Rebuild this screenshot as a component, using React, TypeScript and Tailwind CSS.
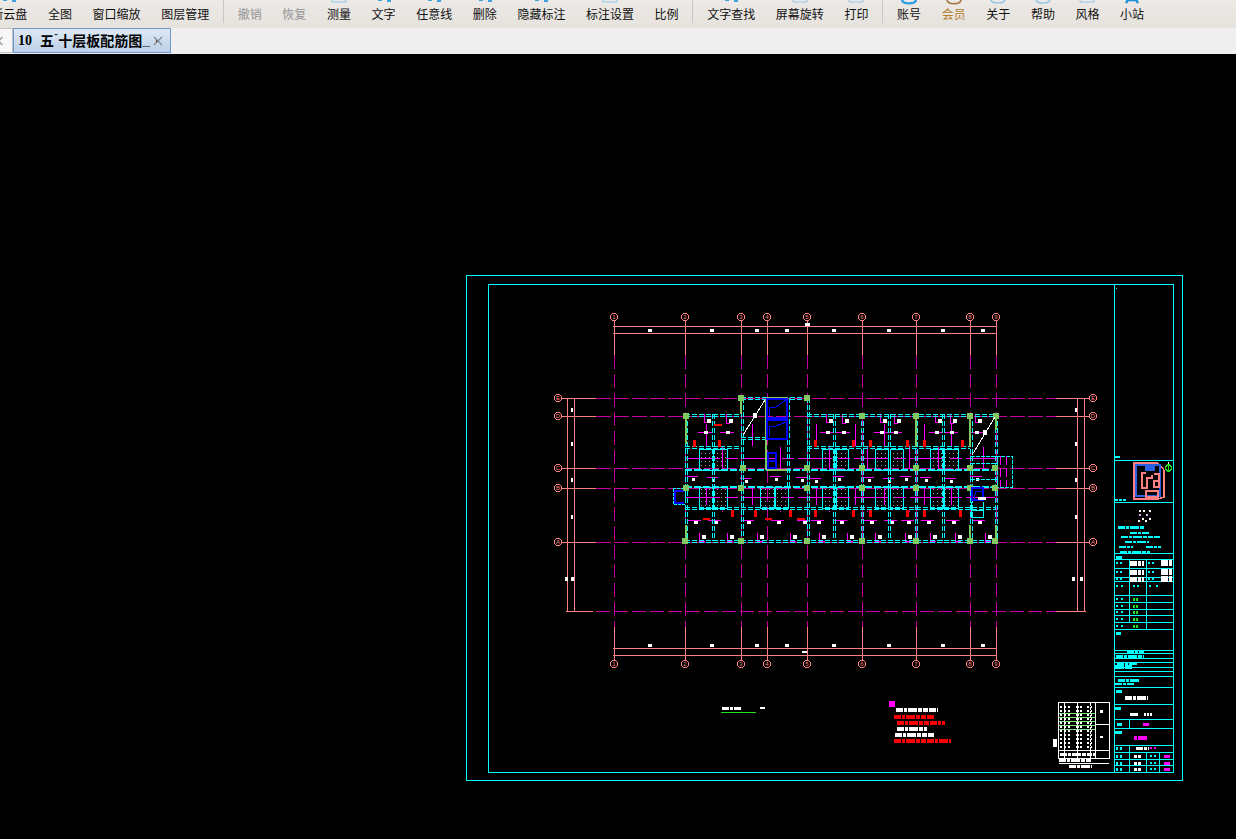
const CY = "#00ffff", SA = "#ff8080", MG = "#ff00ff", DM = "#c800a0", GR = "#80c860", RD = "#ff0000", BL = "#0000ff", WH = "#ffffff";

type Frag = "none" | "box" | "specks" | "arc" | "arcStrong" | "arcBrown" | "legs";
type Item = { t: string; frag?: Frag; c?: string; sep?: boolean };

const items: Item[] = [
  { t: "新云盘", frag: "specks" },
  { t: "全图" },
  { t: "窗口缩放" },
  { t: "图层管理", sep: true },
  { t: "撤销", c: "text-[#949494]" },
  { t: "恢复", c: "text-[#949494]" },
  { t: "测量", frag: "box" },
  { t: "文字", frag: "specks" },
  { t: "任意线", frag: "specks" },
  { t: "删除", frag: "specks" },
  { t: "隐藏标注", frag: "specks" },
  { t: "标注设置", frag: "box" },
  { t: "比例", sep: true },
  { t: "文字查找", frag: "specks" },
  { t: "屏幕旋转", frag: "box" },
  { t: "打印", frag: "box", sep: true },
  { t: "账号", frag: "arcStrong" },
  { t: "会员", frag: "arcBrown", c: "text-[#b5812f]" },
  { t: "关于", frag: "arc" },
  { t: "帮助", frag: "arc" },
  { t: "风格", frag: "box" },
  { t: "小站", frag: "legs" },
];

function Fragment({ f }: { f: Frag }) {
  if (f === "none") return null;
  return (
    <svg width="24" height="6" viewBox="0 0 24 6" className="absolute top-0 left-1/2 -translate-x-1/2">
      {f === "box" && <path d="M5 0V2H19V0" fill="none" stroke="#8cc8ec" strokeWidth="1" />}
      {f === "specks" && <path d="M6 0H10V1H6ZM15 0H19V2H15Z" fill="#3ba3e0" />}
      {f === "arc" && <path d="M5 0C6 4 18 4 19 0" fill="none" stroke="#7cc0e8" strokeWidth="1.2" />}
      {f === "arcStrong" && <path d="M5 0C6 4.5 18 4.5 19 0" fill="none" stroke="#2b9fe4" strokeWidth="2.4" />}
      {f === "arcBrown" && <path d="M5 0C6 5 18 5 19 0" fill="none" stroke="#a3773f" strokeWidth="1.6" />}
      {f === "legs" && <path d="M8 0L6 3M16 0L18 3M8 0H16" fill="none" stroke="#1d8fdc" strokeWidth="2.4" />}
    </svg>
  );
}

function Toolbar() {
  return (
    <div className="h-[28px] shrink-0 overflow-hidden bg-gradient-to-b from-[#ece9e6] to-[#e6e2dd]">
      <div className="flex h-full ml-[-19px] items-stretch">
        {items.map((i) => (
          <div key={i.t} className="flex items-stretch">
            <div className={`relative px-[10.3px] pt-[6px] text-[12px] leading-[16px] whitespace-nowrap ${i.c ?? "text-[#111]"}`}>
              <Fragment f={i.frag ?? "none"} />
              {i.t}
            </div>
            {i.sep && <div className="w-px h-[23px] mx-[3.5px] bg-[#c9c7c3]" />}
          </div>
        ))}
      </div>
    </div>
  );
}

function TabBar() {
  return (
    <div className="h-[26px] shrink-0 flex bg-[#efefef]">
      <div className="w-[13px] h-[25px] bg-[#f8f8f8] border border-l-0 border-[#c4c4c4] flex items-center overflow-hidden text-[#9a9a9a]">
        <svg width="8" height="10" viewBox="0 0 8 10" className="ml-[-3px]"><path d="M5.5 1L1.5 5L5.5 9" fill="none" stroke="currentColor" strokeWidth="1.3" /></svg>
      </div>
      <div className="w-[158px] h-[25px] flex items-center border border-[#6f97c9] bg-gradient-to-b from-[#dfe9f5] to-[#bcd0e8]">
        <div className="w-[136px] flex items-center whitespace-nowrap pl-[2px] text-[14px] font-bold text-black">
          <span className="w-px h-[5px] bg-[#333] mr-[2px]" />
          <span className="font-['Liberation_Serif',serif]">10</span>
          <span className="ml-[8px]">五</span>
          <span className="text-[8px] -translate-y-[3px]">˝</span>
          <span>十层板配筋图</span>
          <span className="font-['Liberation_Sans',sans-serif]">_</span>
          <span className="ml-[2px] font-normal text-[10px]">·</span>
        </div>
        <svg width="10" height="10" viewBox="0 0 10 10" className="ml-[3px]"><path d="M1 1L9 9M9 1L1 9" stroke="#7c8794" strokeWidth="1.1" /></svg>
      </div>
    </div>
  );
}

const L = ({ x1, y1, x2, y2, c, w = 1, d }: { x1: number; y1: number; x2: number; y2: number; c: string; w?: number; d?: string }) => (
  <line x1={x1} y1={y1} x2={x2} y2={y2} stroke={c} strokeWidth={w} strokeDasharray={d} />
);

// illegible CAD annotation, as in the picture: a broken thick stroke
const Blob = ({ x, y, w, h = 3, c = WH, d = "7 1 3 1 9 1 4 1 5 1" }: { x: number; y: number; w: number; h?: number; c?: string; d?: string }) => (
  <line x1={x} y1={y} x2={x + w} y2={y} stroke={c} strokeWidth={h} strokeDasharray={d} />
);

const cols = [[614, "1"], [685, "2"], [741, "3"], [767, "4"], [807, "5"], [862, "6"], [916, "7"], [970, "8"], [996, "9"]] as const;
const rows = [[398, "E"], [416, "D"], [468, "C"], [488, "B"], [542, "A"]] as const;
const dimTop = [[650, 1], [712, 1], [757, 1], [787, 1], [834, 1], [889, 1], [943, 1], [983, 1]] as const;

function Axis() {
  return (
    <g>
      {cols.map(([x, n]) => (
        <g key={n}>
          <L x1={x} y1={321} x2={x} y2={355} c={SA} />
          <L x1={x} y1={355} x2={x} y2={627} c={DM} d="14 5" />
          <L x1={x} y1={627} x2={x} y2={661} c={SA} />
          {[317, 664].map((y) => (
            <g key={y}>
              <circle cx={x} cy={y} r={3.7} fill="none" stroke={SA} />
              <text x={x} y={y + 2} fontSize="6" textAnchor="middle" fill={SA} fontFamily="Liberation Sans, sans-serif">{n}</text>
            </g>
          ))}
        </g>
      ))}
      {rows.map(([y, n]) => (
        <g key={n}>
          <L x1={562} y1={y} x2={596} y2={y} c={SA} />
          <L x1={596} y1={y} x2={1056} y2={y} c={DM} d="15 3" />
          <L x1={1056} y1={y} x2={1089} y2={y} c={SA} />
          {[558, 1093].map((x) => (
            <g key={x}>
              <circle cx={x} cy={y} r={3.7} fill="none" stroke={SA} />
              <text x={x} y={y + 2} fontSize="6" textAnchor="middle" fill={SA} fontFamily="Liberation Sans, sans-serif">{n}</text>
            </g>
          ))}
        </g>
      ))}
      <L x1={566} y1={611} x2={593} y2={611} c={SA} />
      <L x1={596} y1={611} x2={1056} y2={611} c={DM} d="14 4" />
      <L x1={1056} y1={611} x2={1086} y2={611} c={SA} />
      {[567, 574, 1077, 1084].map((x) => <L key={x} x1={x} y1={398} x2={x} y2={611} c={SA} />)}
      {[326, 333, 648, 655].map((y) => <L key={y} x1={613} y1={y} x2={997} y2={y} c={SA} />)}
      {dimTop.map(([x]) => (
        <g key={x}>
          <rect x={x - 2} y={329} width={4} height={2.5} fill={WH} />
          <rect x={x - 2} y={644} width={4} height={2.5} fill={WH} />
        </g>
      ))}
      <rect x={805} y={323} width={5} height={2.5} fill={WH} />
      <rect x={802} y={651} width={5} height={2} fill={WH} />
      {[[571, 408], [1075, 408], [571, 442], [1075, 442], [571, 478], [1075, 478], [571, 515], [1075, 515]].map(([x, y]) => (
        <rect key={`${x}-${y}`} x={x} y={y} width={2} height={4} fill={WH} />
      ))}
      {[[565, 577], [571, 577], [1072, 577], [1080, 577]].map(([x, y]) => (
        <rect key={x} x={x} y={y} width={3} height={4} fill={WH} />
      ))}
    </g>
  );
}

const DD = ({ x1, y1, x2, y2 }: { x1: number; y1: number; x2: number; y2: number }) => {
  const v = x1 === x2;
  return (
    <g>
      <L x1={x1} y1={y1} x2={x2} y2={y2} c={CY} d="5 2" />
      <L x1={v ? x1 + 2 : x1} y1={v ? y1 : y1 + 2} x2={v ? x2 + 2 : x2} y2={v ? y2 : y2 + 2} c={CY} d="5 2" />
    </g>
  );
};

const roomsUp = [[699, 713], [713, 727], [822, 834], [836, 848], [875, 888], [890, 903], [930, 943], [944, 958]];
const roomsDn = [[699, 713], [713, 727], [760, 774], [775, 788], [822, 834], [836, 848], [875, 888], [890, 903], [930, 943], [944, 958]];
const redUp = [694, 719, 815, 853, 870, 907, 924, 962];
const redDn = [732, 755, 790, 815, 853, 870, 907, 924, 960];
const topBars = [704, 726, 826, 842, 880, 894, 935, 950, 975];
const botBars = [699, 727, 757, 790, 819, 847, 875, 905, 930, 955, 985];
const greens = [
  [686, 416], [862, 416], [916, 416], [970, 416], [996, 416], [741, 398], [807, 398],
  [743, 468], [807, 468], [862, 468], [916, 468], [970, 468], [995, 468],
  [686, 488], [741, 488], [807, 488], [862, 488], [916, 488], [970, 488], [995, 488],
  [685, 541], [741, 541], [807, 541], [862, 541], [916, 541], [970, 541], [995, 541],
];

function Plan() {
  return (
    <g>
      <defs>
        <pattern id="speck" width="4" height="4" patternUnits="userSpaceOnUse">
          <rect x="1" y="1" width="1" height="1" fill="#8aa0b0" />
        </pattern>
      </defs>
      {[...roomsUp.map((r) => [r[0], 449, r[1], 470]), ...roomsDn.map((r) => [r[0], 487, r[1], 508])].map(([a, t, b, e]) => (
        <g key={`${a}-${t}`}>
          <rect x={a} y={t} width={b - a} height={e - t} fill="url(#speck)" stroke={CY} />
        </g>
      ))}
      {/* magenta slab bars */}
      {[458, 497].map((y) => <L key={y} x1={686} y1={y} x2={995} y2={y} c={MG} d="34 6 12 4" />)}
      {[706, 722, 752, 780, 816, 829, 855, 867, 884, 909, 924, 938, 951, 983].map((x, i) => (
        <L key={x} x1={x} y1={i % 2 ? 447 : 424} x2={x} y2={i % 2 ? 512 : 505} c={MG} d="22 42" />
      ))}
      {topBars.map((x, i) => (
        <g key={x}>
          <path d={`M${x} 414V${422 + (i % 2)}H${x + 4}`} fill="none" stroke={MG} />
          <rect x={x + 3} y={419} width={3.5} height={3.5} fill={WH} />
          <L x1={x - 6} y1={432} x2={x + 8} y2={432} c={MG} />
          <rect x={x} y={431} width={3.5} height={3} fill={WH} />
        </g>
      ))}
      {botBars.map((x) => (
        <g key={x}>
          <path d={`M${x} 533V541H${x + 6}`} fill="none" stroke={MG} />
          <rect x={x + 3} y={535} width={3.5} height={3.5} fill={WH} />
        </g>
      ))}
      {[692, 712, 745, 775, 801, 815, 838, 868, 888, 905, 925, 950, 976].map((x, i) => (
        <g key={x}>
          <L x1={x - 5} y1={476 + (i % 3)} x2={x + 6} y2={476 + (i % 3)} c={MG} />
          <rect x={x} y={478 + (i % 3)} width={3} height={3} fill={WH} />
          <L x1={x - 4} y1={520} x2={x + 9} y2={520} c={MG} />
          <rect x={x + 2} y={521} width={3.5} height={2.5} fill={WH} />
        </g>
      ))}
      {/* cyan walls */}
      <DD x1={685} y1={414} x2={741} y2={414} />
      <DD x1={741} y1={397} x2={807} y2={397} />
      <DD x1={807} y1={414} x2={996} y2={414} />
      <DD x1={685} y1={446} x2={741} y2={446} />
      <DD x1={807} y1={446} x2={970} y2={446} />
      <DD x1={741} y1={437} x2={767} y2={437} />
      {[470, 487].map((y) => <L key={y} x1={685} y1={y} x2={996} y2={y} c={CY} w={2} d="7 2" />)}
      <DD x1={685} y1={507} x2={996} y2={507} />
      <DD x1={685} y1={540} x2={996} y2={540} />
      {[[685, 414, 541], [712, 414, 541], [741, 398, 541], [787, 398, 487], [807, 398, 541], [833, 414, 541], [861, 414, 541], [888, 414, 541], [915, 414, 541], [942, 414, 541], [970, 414, 541], [995, 414, 541]].map(([x, a, b]) => (
        <DD key={x} x1={x} y1={a} x2={x} y2={b} />
      ))}
      {/* right annex and left pocket */}
      <path d="M971 456H1012V487H971M997 456V487M971 463H997M971 479H997" fill="none" stroke={CY} strokeDasharray="4 1" />
      <path d="M1000 456V487M1006 456V487" fill="none" stroke={MG} strokeDasharray="9 3" />
      <path d="M673 488H685V504H673Z" fill="none" stroke={CY} strokeDasharray="3 1" />
      <path d="M675 504V491H684M675 503H684" fill="none" stroke={BL} strokeWidth="1.2" />
      <path d="M971 502V517H983V502M971 510H983" fill="none" stroke={CY} />
      {/* green */}
      {greens.map(([x, y]) => <rect key={`${x}-${y}`} x={x - 3} y={y - 3} width={6} height={6} fill={GR} />)}
      <path d="M741 398V414M916 416V447M970 416V447M996 416V430M970 525V541M996 525V541" fill="none" stroke={GR} strokeWidth="2.5" />
      <path d="M766 399V470" fill="none" stroke={GR} strokeWidth="2" />
      <path d="M686 416V444M686 525V541" fill="none" stroke={GR} strokeWidth="1.6" />
      <path d="M767 398H787M767 439H787M767 470H787" fill="none" stroke={GR} strokeWidth="2" />
      {/* stair boxes */}
      <path d="M767 399H787V418H767ZM767 420H787V439H767Z" fill="none" stroke={BL} strokeWidth="1.6" />
      <path d="M769 416V407H776L786 400M769 437V426H776L786 422" fill="none" stroke={BL} />
      <rect x={767} y={418} width={20} height={3} fill={BL} />
      <path d="M768 453H776V468H768ZM768 461H776" fill="none" stroke={BL} strokeWidth="1.6" />
      <path d="M972 488H983V500H972Z" fill="none" stroke={BL} strokeWidth="1.4" />
      <path d="M974 499L976 491H982" fill="none" stroke={BL} />
      <rect x={978} y={497} width={8} height={3} fill={WH} />
      <L x1={743} y1={435} x2={765} y2={400} c={WH} />
      <L x1={972} y1={455} x2={995} y2={417} c={WH} />
      <rect x={753} y={413} width={4} height={5} fill={WH} />
      <rect x={983} y={430} width={4} height={5} fill={WH} />
      {/* red */}
      {redUp.map((x) => <path key={x} d={`M${x} 440V447M${x + 1} 440V447`} stroke={RD} strokeWidth="1.2" />)}
      {redDn.map((x) => <path key={x} d={`M${x} 510V517M${x + 1} 510V517`} stroke={RD} strokeWidth="1.2" />)}
      <path d="M714 425H722M703 519H710M765 519H772M797 519H805" stroke={RD} strokeWidth="2" />
    </g>
  );
}

const tbLines = [460, 502, 553, 559, 568, 577, 581, 595, 602, 609, 615, 622, 629, 650, 653, 658, 662, 667, 671, 676, 687, 704, 719, 728, 745, 752, 759, 765];

function TitleBlock() {
  return (
    <g>
      <rect x={466.5} y={275.5} width={716} height={505} fill="none" stroke={CY} />
      <rect x={488.5} y={284.5} width={685} height={488} fill="none" stroke={CY} />
      <L x1={1114.5} y1={285} x2={1114.5} y2={772} c={CY} />
      {tbLines.map((y) => <L key={y} x1={1115} y1={y + 0.5} x2={1173} y2={y + 0.5} c={CY} />)}
      <path d="M1129.5 559V595M1146.5 559V595M1129.5 581V622M1146.5 581V629M1129.5 719V728M1129.5 745V772M1146.5 752V772M1159.5 752V772" fill="none" stroke={CY} />
      {/* key plan */}
      <path d="M1134 463H1158L1164 470V497L1158 499H1134Z" fill="none" stroke={SA} strokeWidth="1.4" />
      <path d="M1136 465H1160V496H1136Z" fill="none" stroke="#2a60e0" strokeWidth="1.4" />
      <rect x={1145} y={466} width={10} height={5} fill="#2a60e0" />
      <path d="M1146 473H1142V488H1147V478H1152V475M1154 474H1159V487H1154V481H1159M1146 491H1158V497H1146Z" fill="none" stroke={SA} strokeWidth="1.6" />
      <circle cx={1168.5} cy={468} r={3} fill="none" stroke="#20e020" strokeWidth="1.4" />
      <L x1={1168.5} y1={465} x2={1168.5} y2={471} c="#20e020" />
      <L x1={1168.5} y1={462} x2={1168.5} y2={464} c={WH} />
      <Blob x={1116} y={288} w={1} h={1} c={CY} />
      <Blob x={1115} y={457} w={5} h={2} c={CY} />
      <Blob x={1115} y={500} w={12} h={2} c={CY} d="3 1" />
      {/* seal dots */}
      {[[1139, 510], [1143, 510], [1149, 510], [1139, 514], [1146, 514], [1142, 518], [1149, 518], [1138, 520], [1145, 520]].map(([x, y]) => (
        <rect key={`${x}-${y}`} x={x} y={y} width={2} height={2} fill={y === 514 ? "#e0b0ff" : WH} />
      ))}
      <Blob x={1118} y={527} w={27} h={3} c={CY} />
      <Blob x={1130} y={533} w={19} h={2} c={CY} />
      <Blob x={1121} y={537} w={39} h={2} c={CY} />
      <Blob x={1125} y={542} w={24} h={2} c={CY} />
      <Blob x={1119} y={547} w={14} h={2} c={CY} />
      <Blob x={1146} y={547} w={15} h={2} c={CY} />
      <Blob x={1120} y={552} w={30} h={2} c={CY} />
      <Blob x={1116} y={557} w={6} h={3} c={CY} />
      {[563, 572, 579].map((y) => (
        <g key={y}>
          <Blob x={1116} y={y} w={7} h={2} c={CY} d="2 2" />
          <Blob x={1130} y={y} w={14} h={5} />
          <Blob x={1148} y={y} w={6} h={2} c={CY} d="2 2" />
          <Blob x={1161} y={y} w={11} h={6} />
        </g>
      ))}
      {[586, 599, 606, 612, 619, 626].map((y, i) => (
        <g key={y}>
          <Blob x={1116} y={y} w={8} h={2} c={CY} d="2 3" />
          {i === 0 ? <Blob x={1133} y={y} w={6} h={2} c={CY} d="2 2" /> : <Blob x={1133} y={y} w={5} h={3} c="#20e020" d="2 1" />}
        </g>
      ))}
      <Blob x={1149} y={586} w={9} h={2} c={CY} d="2 5" />
      <Blob x={1116} y={633} w={5} h={3} c={CY} />
      <Blob x={1127} y={652} w={17} h={3} c={CY} />
      <Blob x={1116} y={657} w={28} h={4} c={CY} />
      <Blob x={1117} y={663} w={20} h={3} c={CY} />
      <Blob x={1115} y={667} w={17} h={4} c={CY} d="9 1" />
      <Blob x={1118} y={680} w={22} h={3} c={CY} />
      <Blob x={1115} y={684} w={19} h={2} c={CY} />
      <Blob x={1116} y={691} w={6} h={3} c={CY} />
      <Blob x={1125} y={698} w={23} h={4} />
      <Blob x={1115} y={708} w={6} h={3} c={CY} />
      <Blob x={1130} y={714} w={8} h={3} d="8 0" />
      <Blob x={1144} y={714} w={9} h={3} d="2 1" />
      <Blob x={1117} y={724} w={5} h={3} c={CY} />
      <Blob x={1143} y={724} w={6} h={3} c={MG} />
      <Blob x={1115} y={732} w={7} h={3} c={CY} />
      <Blob x={1134} y={738} w={13} h={4} c={MG} d="3 1 9 0" />
      {[748, 756, 763, 769].map((y, i) => (
        <g key={y}>
          <Blob x={1116} y={y} w={7} h={3} c={CY} d="2 2" />
          {i === 0 ? <Blob x={1136} y={y} w={13} h={3} /> : <Blob x={1134} y={y} w={8} h={3} d="3 1" />}
          <Blob x={1150} y={y} w={6} h={2} c={i === 0 ? MG : CY} d="2 2" />
          {i > 0 && <Blob x={1164} y={y} w={6} h={3} c={MG} />}
        </g>
      ))}
    </g>
  );
}

function Notes() {
  return (
    <g>
      <Blob x={722} y={708} w={19} h={3} />
      <L x1={721} y1={712} x2={756} y2={712} c="#20e020" />
      <Blob x={760} y={708} w={5} h={2} />
      <rect x={889} y={701} width={6} height={6} fill={MG} />
      <Blob x={896} y={710} w={42} h={4} />
      <Blob x={894} y={717} w={40} h={4} c={RD} />
      <Blob x={897} y={723} w={48} h={4} c={RD} />
      <Blob x={897} y={729} w={30} h={4} />
      <Blob x={895} y={735} w={39} h={4} />
      <Blob x={894} y={741} w={57} h={4} c={RD} />
      <rect x={1058.5} y={702.5} width={50.5} height={56} fill="none" stroke={WH} />
      <path d="M1095 703V758M1095 724H1109M1058 750H1109M1059 763H1109" fill="none" stroke={WH} />
      {[707, 711, 715, 719, 723, 727, 731, 735, 739, 743, 747].map((y) => (
        <g key={y}>
          <Blob x={1060} y={y} w={10} h={2} d="2 2" />
          <Blob x={1076} y={y} w={6} h={2} d="3 1" />
          <Blob x={1087} y={y} w={5} h={2} d="2 2" />
        </g>
      ))}
      {[713, 717, 721, 725, 729].map((y) => <L key={y} x1={1059} y1={y} x2={1095} y2={y} c="#80e080" />)}
      {[1064, 1077, 1090].map((x) => <L key={x} x1={x} y1={703} x2={x} y2={758} c={WH} d="3 1" />)}
      <rect x={1100} y={710} width={3} height={3} fill={WH} />
      <rect x={1100} y={736} width={3} height={2} fill={WH} />
      <Blob x={1053} y={743} w={4} h={8} />
      <Blob x={1060} y={754} w={35} h={3} />
      <Blob x={1059} y={760} w={33} h={4} />
      <Blob x={1069} y={766} w={23} h={3} />
    </g>
  );
}

export default function App() {
  return (
    <div className="h-screen flex flex-col overflow-hidden bg-black font-['Noto_Sans_CJK_SC','Noto_Sans',sans-serif]">
      <Toolbar />
      <TabBar />
      <div className="flex-1 bg-black">
        <svg width="1236" height="785" viewBox="0 54 1236 785" className="block" shapeRendering="crispEdges">
          <TitleBlock />
          <Axis />
          <Plan />
          <Notes />
        </svg>
      </div>
    </div>
  );
}
